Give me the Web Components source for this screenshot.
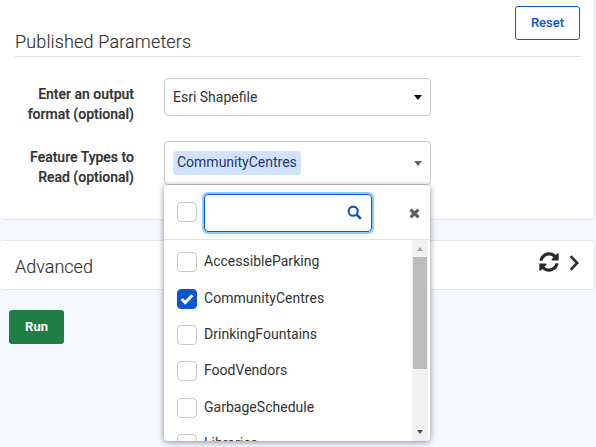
<!DOCTYPE html>
<html>
<head>
<meta charset="utf-8">
<style>
    html, body { margin: 0; height: 447px; overflow: hidden; }
    body {
        background: #f5f8ff;
        font-family: Roboto, "Liberation Sans", sans-serif;
        color: #333;
    }
</style>
</head>
<body>
<params-page></params-page>
<script>
const CHECK = `<svg width="14" height="12" viewBox="0 0 14 12"><path d="M1.6 6 5.2 9.6 12.4 2.2" fill="none" stroke="#fff" stroke-width="3"/></svg>`;

class CheckBox extends HTMLElement {
    constructor() {
        super();
        const shadow = this.attachShadow({ mode: 'open' });
        const on = this.hasAttribute('checked');
        shadow.innerHTML = `
            <style>
                :host { display: block; width: 20px; height: 20px; flex: none; }
                .box {
                    box-sizing: border-box;
                    width: 20px;
                    height: 20px;
                    border: 1px solid ${on ? '#0d55cf' : '#c8c8c8'};
                    border-radius: 4px;
                    background: ${on ? '#0d55cf' : '#fff'};
                    display: flex;
                    align-items: center;
                    justify-content: center;
                }
            </style>
            <div class="box">${on ? CHECK : ''}</div>
        `;
    }
}

class FormRow extends HTMLElement {
    constructor() {
        super();
        const shadow = this.attachShadow({ mode: 'open' });
        shadow.innerHTML = `
            <style>
                :host { display: flex; align-items: flex-start; }
                .label {
                    width: 119px;
                    margin-right: 30px;
                    padding-top: 6px;
                    text-align: right;
                    font-weight: 500;
                    font-size: 14px;
                    line-height: 20px;
                    color: #333;
                    -webkit-text-stroke: 0.2px #333;
                }
            </style>
            <div class="label"><slot name="label"></slot></div>
            <slot></slot>
        `;
    }
}

class SelectBox extends HTMLElement {
    constructor() {
        super();
        const shadow = this.attachShadow({ mode: 'open' });
        const arrow = this.getAttribute('arrow') || '#000';
        shadow.innerHTML = `
            <style>
                :host {
                    display: flex;
                    align-items: center;
                    box-sizing: border-box;
                    width: 267px;
                    padding: 0 8px 0 8px;
                    border: 1px solid #c8c8c8;
                    border-radius: 4px;
                    background: #fff;
                    font-size: 14px;
                    color: #333;
                }
                .value { flex: 1; }
                .arrow {
                    width: 0;
                    height: 0;
                    border-left: 4.5px solid transparent;
                    border-right: 4.5px solid transparent;
                    border-top: 5px solid ${arrow};
                    margin-top: 1px;
                }
            </style>
            <div class="value"><slot></slot></div>
            <div class="arrow"></div>
        `;
    }
}

class TagChip extends HTMLElement {
    constructor() {
        super();
        const shadow = this.attachShadow({ mode: 'open' });
        shadow.innerHTML = `
            <style>
                :host {
                    display: inline-block;
                    padding: 0 4px;
                    height: 24px;
                    line-height: 23px;
                    border-radius: 4px;
                    background: #d1e2fd;
                    color: #1c3a66;
                    font-size: 14px;
                }
            </style>
            <slot></slot>
        `;
    }
}

class DropMenu extends HTMLElement {
    constructor() {
        super();
        const shadow = this.attachShadow({ mode: 'open' });
        const items = JSON.parse(this.getAttribute('items'));
        const rows = items.map(i => `
            <div class="item">
                <check-box ${i.on ? 'checked' : ''}></check-box>
                <span>${i.name}</span>
            </div>`).join('');
        shadow.innerHTML = `
            <style>
                :host {
                    position: absolute;
                    left: 164px;
                    top: 185px;
                    width: 266px;
                    height: 256px;
                    box-sizing: border-box;
                    background: #fff;
                    border-radius: 4px;
                    box-shadow: 0 1px 6px rgba(0,0,0,0.45);
                    overflow: hidden;
                    display: flex;
                    flex-direction: column;
                }
                .head {
                    flex: none;
                    height: 55px;
                    box-sizing: border-box;
                    border-bottom: 1px solid #e2e2e2;
                    display: flex;
                    align-items: center;
                    padding: 0 9px 0 13px;
                }
                .search {
                    box-sizing: border-box;
                    width: 168px;
                    height: 38px;
                    margin: 1px 37px 0 7px;
                    border: 1px solid #0d55cf;
                    border-radius: 4px;
                    box-shadow: 0 0 0 2px #8ccbff;
                    display: flex;
                    align-items: center;
                    justify-content: flex-end;
                    padding-right: 9px;
                }
                .close { display: block; margin-top: 3px; }
                .body { flex: 1; display: flex; min-height: 0; }
                .list { flex: 1; padding: 4px 0 0 13px; overflow: hidden; }
                .item {
                    display: flex;
                    align-items: center;
                    height: 36.4px;
                    font-size: 14px;
                    color: #333;
                }
                .item span { margin: 0 0 2px 7px; letter-spacing: 0.02px; }
                .bar {
                    flex: none;
                    width: 16px;
                    margin-right: 2px;
                    background: #f1f1f1;
                    display: flex;
                    flex-direction: column;
                    align-items: center;
                }
                .up, .down {
                    width: 0;
                    height: 0;
                    border-left: 3.5px solid transparent;
                    border-right: 3.5px solid transparent;
                }
                .up { border-bottom: 4px solid #a3a3a3; margin-top: 7px; }
                .down { border-top: 4px solid #505050; margin-top: auto; margin-bottom: 7px; }
                .thumb { width: 14px; height: 112px; background: #bdbdbd; margin-top: 6px; }
            </style>
            <div class="head">
                <check-box></check-box>
                <div class="search">
                    <svg width="15" height="15" viewBox="0 0 16 16"><circle cx="6.6" cy="6.6" r="4.9" fill="none" stroke="#0d55cf" stroke-width="2.2"/><path d="M10.3 10.3 14.8 14.8" stroke="#0d55cf" stroke-width="2.8"/></svg>
                </div>
                <svg class="close" width="11" height="11" viewBox="0 0 10 10"><path d="M1.4 1.4 8.6 8.6M8.6 1.4 1.4 8.6" stroke="#5f5f5f" stroke-width="2.8"/></svg>
            </div>
            <div class="body">
                <div class="list">${rows}</div>
                <div class="bar"><div class="up"></div><div class="thumb"></div><div class="down"></div></div>
            </div>
        `;
    }
}

class AdvancedPanel extends HTMLElement {
    constructor() {
        super();
        const shadow = this.attachShadow({ mode: 'open' });
        shadow.innerHTML = `
            <style>
                :host {
                    display: flex;
                    align-items: center;
                    box-sizing: border-box;
                    height: 50px;
                    margin: 20px 1px 0 0;
                    padding: 0 15px;
                    background: #fff;
                    border: 1px solid #e4e6ec;
                    border-left: 0;
                    border-radius: 4px;
                }
                .title { flex: 1; padding-top: 2px; font-size: 18px; font-weight: 300; color: #333; -webkit-text-stroke: 0.15px #333; }
                svg { display: block; }
                .sync { margin: -6px 10px 0 0; }
                .chev { margin-top: -4px; }
            </style>
            <div class="title">Advanced</div>
            <svg class="sync" width="20" height="20" viewBox="0 0 512 512"><path fill="#2b2b2b" d="M370.72 133.28C339.458 104.008 298.888 87.962 255.848 88c-77.458.068-144.328 53.178-162.791 126.85-1.344 5.363-6.122 9.15-11.651 9.15H24.103c-7.498 0-13.194-6.807-11.807-14.176C33.933 94.924 134.813 8 256 8c66.448 0 126.791 26.136 171.315 68.685L463.03 40.97C478.149 25.851 504 36.559 504 57.941V192c0 13.255-10.745 24-24 24H345.941c-21.382 0-32.09-25.851-16.971-40.971l41.75-41.749zM32 296h134.059c21.382 0 32.09 25.851 16.971 40.971l-41.75 41.75c31.262 29.273 71.835 45.319 114.876 45.28 77.418-.07 144.315-53.144 162.787-126.849 1.344-5.363 6.122-9.15 11.651-9.15h57.304c7.498 0 13.194 6.807 11.807 14.176C478.067 417.076 377.187 504 256 504c-66.448 0-126.791-26.136-171.315-68.685L48.97 471.03C33.851 486.149 8 475.441 8 454.059V320c0-13.255 10.745-24 24-24z"/></svg>
            <svg class="chev" width="10" height="16" viewBox="0 0 10 16"><path d="M1.6 1.2 8.2 8 1.6 14.8" fill="none" stroke="#2b2b2b" stroke-width="2.6"/></svg>
        `;
    }
}

class ParamsPage extends HTMLElement {
    constructor() {
        super();
        const shadow = this.attachShadow({ mode: 'open' });
        const items = [
            { name: 'AccessibleParking' },
            { name: 'CommunityCentres', on: true },
            { name: 'DrinkingFountains' },
            { name: 'FoodVendors' },
            { name: 'GarbageSchedule' },
            { name: 'Libraries' }
        ];
        shadow.innerHTML = `
            <style>
                :host { display: block; position: relative; height: 447px; overflow: hidden; }
                .card {
                    box-sizing: border-box;
                    height: 220px;
                    margin-right: 1px;
                    padding: 6px 14px 0 15px;
                    background: #fff;
                    border-bottom: 1px solid #e4e6ec;
                    border-right: 1px solid #e4e6ec;
                    border-radius: 0 0 4px 4px;
                }
                .reset-row { display: flex; justify-content: flex-end; height: 20px; }
                .reset {
                    box-sizing: border-box;
                    width: 65px;
                    height: 34px;
                    border: 1px solid #0d55cf;
                    border-radius: 3px;
                    background: #fff;
                    color: #0d55cf;
                    font: 500 13px/32px Roboto, sans-serif;
                    text-align: center;
                }
                h2 {
                    margin: 0 0 21px;
                    height: 31px;
                    box-sizing: border-box;
                    font-size: 18px;
                    font-weight: 300;
                    line-height: 31px;
                    letter-spacing: 0.15px;
                    color: #333;
                    -webkit-text-stroke: 0.15px #333;
                    border-bottom: 1px solid #dedede;
                }
                .rows { display: flex; flex-direction: column; gap: 17px; }
                .s1 { height: 38px; }
                .s2 { height: 44px; }
                .run {
                    box-sizing: border-box;
                    width: 55px;
                    height: 34px;
                    margin: 20px 0 0 9px;
                    border-radius: 3px;
                    background: #1e7e44;
                    color: #fff;
                    font: 700 13px/33px Roboto, sans-serif;
                    text-align: center;
                }
            </style>
            <section class="card">
                <div class="reset-row"><div class="reset">Reset</div></div>
                <h2>Published Parameters</h2>
                <div class="rows">
                    <form-row>
                        <span slot="label">Enter an output<br>format (optional)</span>
                        <select-box class="s1">Esri Shapefile</select-box>
                    </form-row>
                    <form-row>
                        <span slot="label">Feature Types to<br>Read (optional)</span>
                        <select-box class="s2" arrow="#666"><tag-chip>CommunityCentres</tag-chip></select-box>
                    </form-row>
                </div>
            </section>
            <advanced-panel></advanced-panel>
            <div class="run">Run</div>
            <drop-menu items='${JSON.stringify(items)}'></drop-menu>
        `;
    }
}

customElements.define('check-box', CheckBox);
customElements.define('form-row', FormRow);
customElements.define('select-box', SelectBox);
customElements.define('tag-chip', TagChip);
customElements.define('drop-menu', DropMenu);
customElements.define('advanced-panel', AdvancedPanel);
customElements.define('params-page', ParamsPage);
</script>
</body>
</html>
